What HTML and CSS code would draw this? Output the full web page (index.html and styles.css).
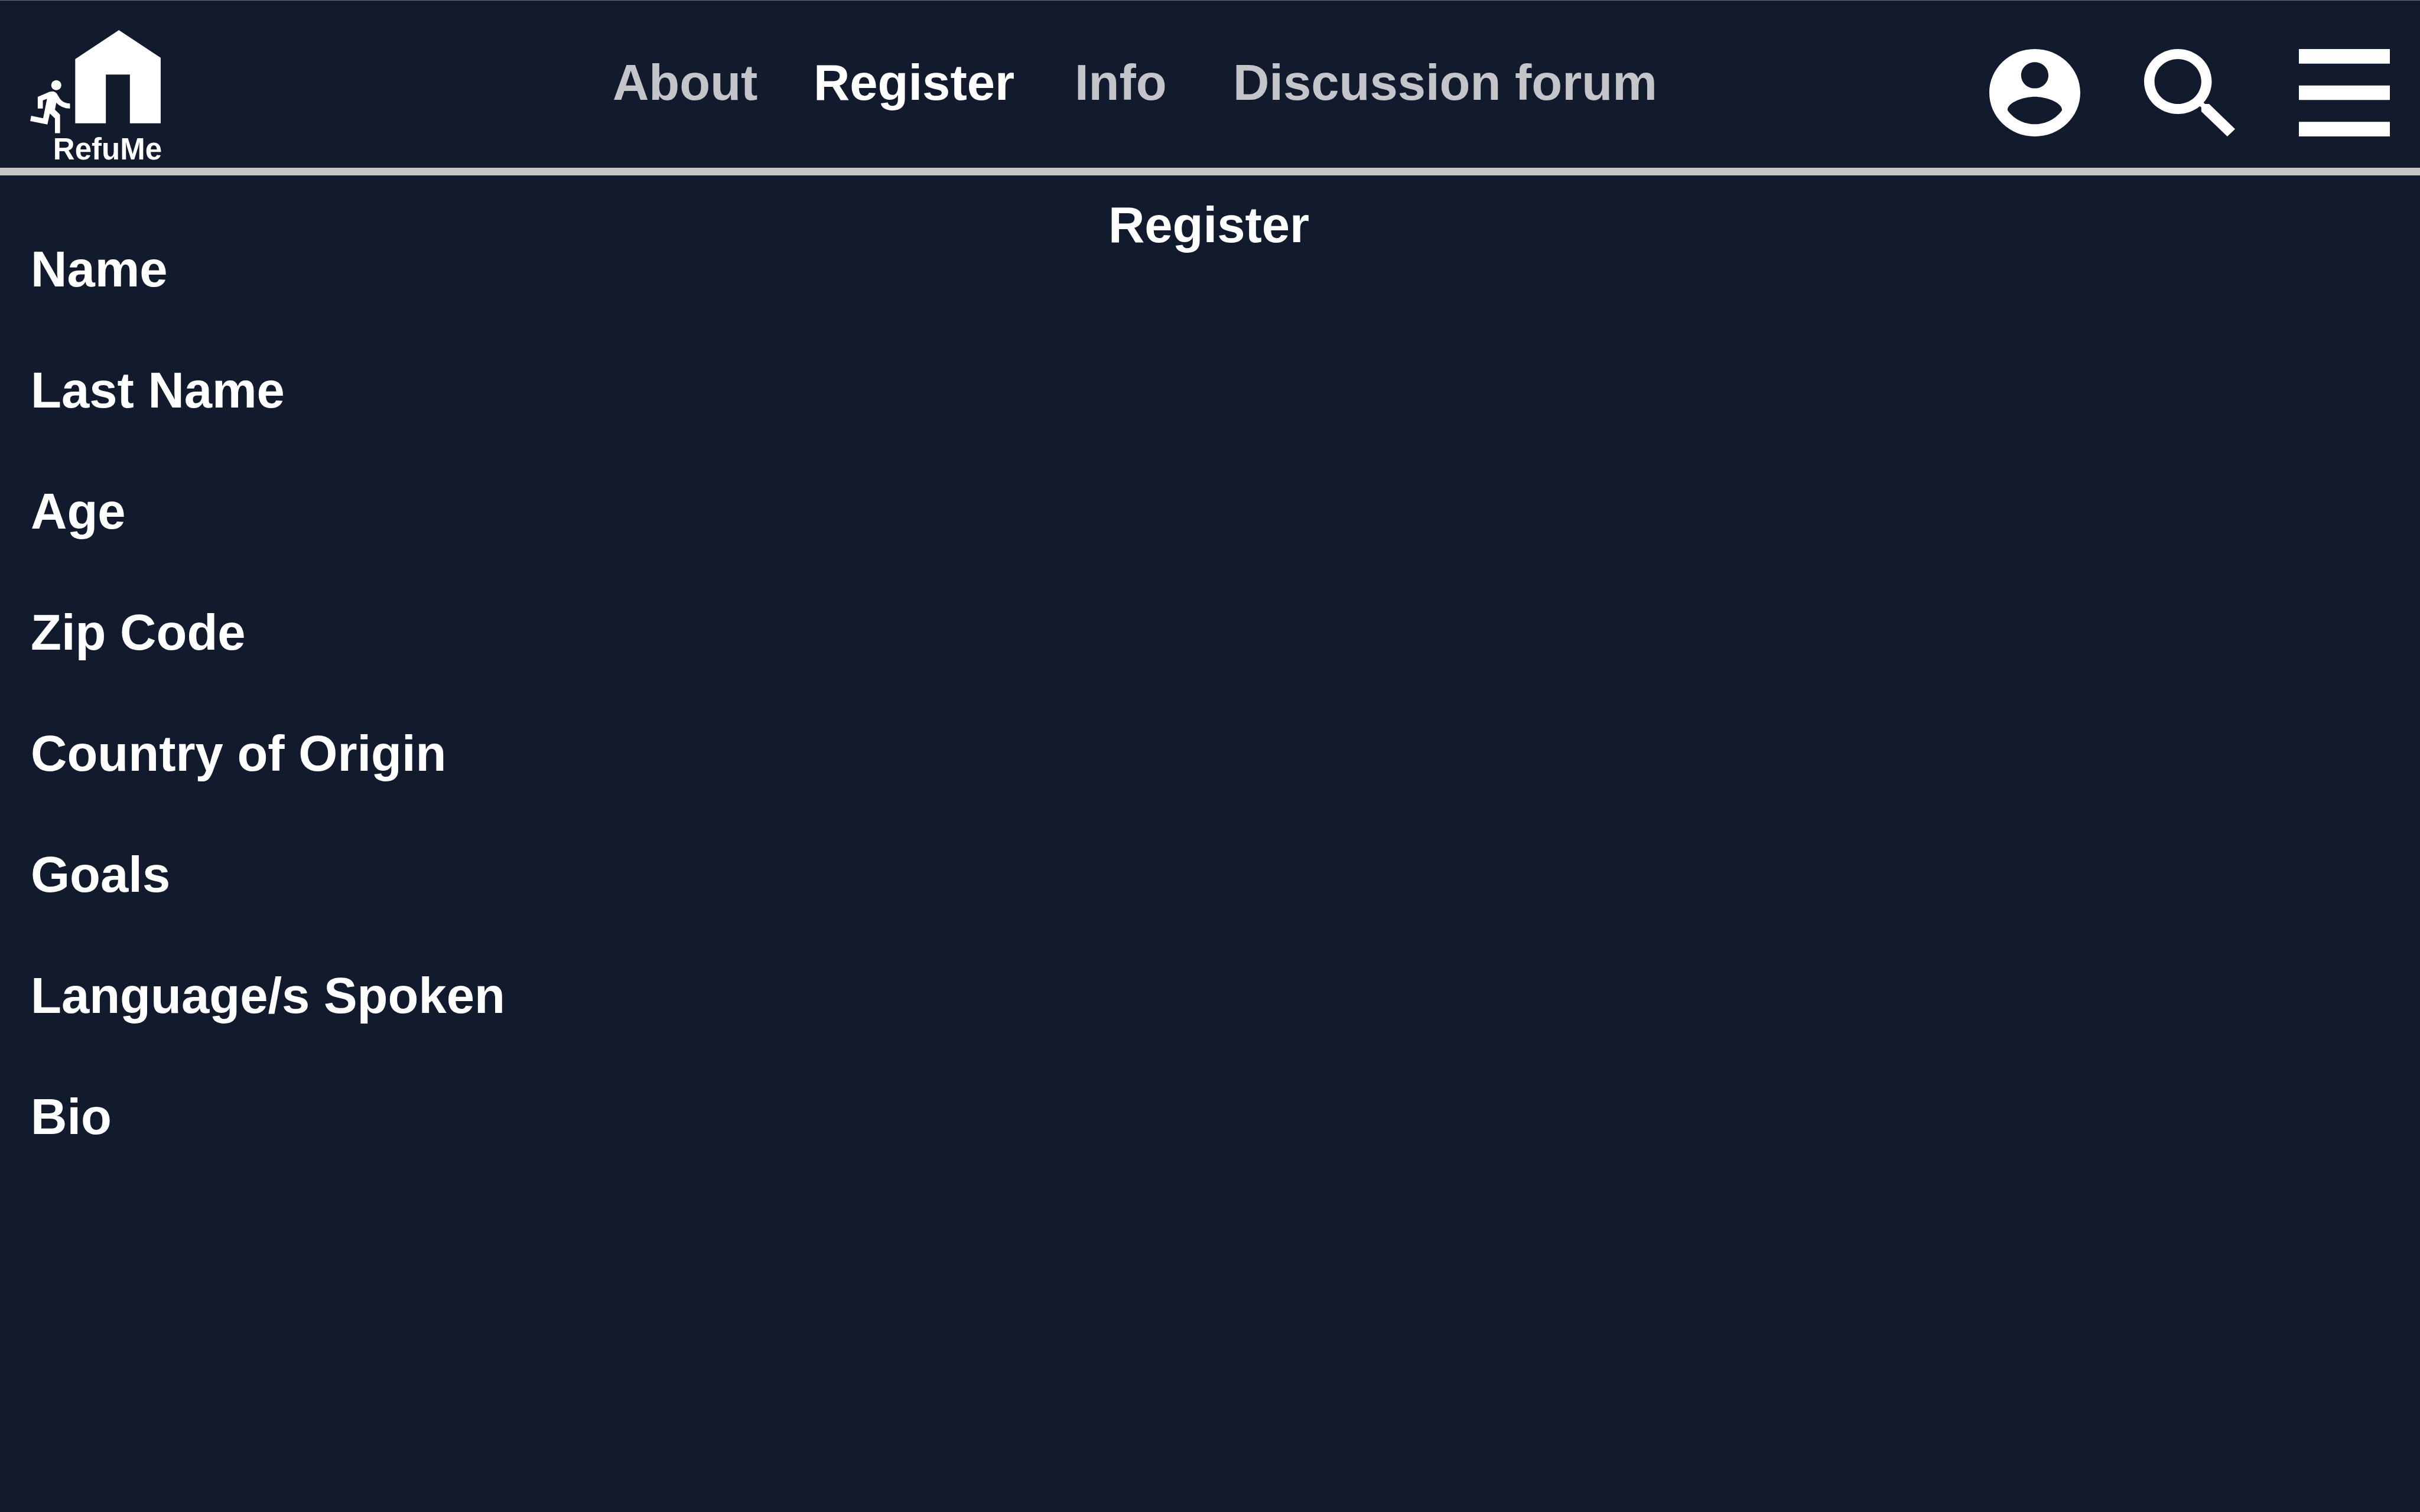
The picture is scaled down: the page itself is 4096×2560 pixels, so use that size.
FILE: index.html
```html
<!DOCTYPE html>
<html lang="en">
<head>
  <meta charset="utf-8">
  <meta name="viewport" content="width=device-width, initial-scale=1">
  <title>RefuMe</title>
  <link rel="stylesheet" href="styles.css">
</head>
<body>
  <header class="site-header">
    <a class="logo" href="#">
      <svg class="logo-mark" viewBox="225 225 975 774" aria-hidden="true">
        <path d="M885 225 1196 431V919H967V556H788V919H560V440Z"/>
        <circle cx="419" cy="635" r="37.5"/>
        <path d="M281 722 368 685Q385 680 400 682 413 684 423 698L447 737Q474 771 521 771V809Q460 809 419 766L409 818 447 854V992H409V882L371 846 353 927 225 902 232 863 321 881 350 736 319 748V809H281Z"/>
      </svg>
      <span class="logo-name">RefuMe</span>
    </a>

    <nav class="nav">
      <a class="nav-link" href="#">About</a>
      <a class="nav-link is-active" href="#" aria-current="page">Register</a>
      <a class="nav-link" href="#">Info</a>
      <a class="nav-link" href="#">Discussion forum</a>
    </nav>

    <div class="actions">
      <button class="icon-button" type="button" aria-label="Account">
        <svg class="icon" viewBox="2 2 20 20" preserveAspectRatio="none" aria-hidden="true">
          <path d="M12 2C6.48 2 2 6.48 2 12s4.48 10 10 10 10-4.48 10-10S17.52 2 12 2zm0 3c1.66 0 3 1.34 3 3s-1.34 3-3 3-3-1.34-3-3 1.34-3 3-3zm0 14.2c-2.5 0-4.71-1.28-6-3.22.03-1.99 4-3.08 6-3.08 1.99 0 5.97 1.09 6 3.08-1.29 1.94-3.5 3.22-6 3.22z"/>
        </svg>
      </button>
      <button class="icon-button" type="button" aria-label="Search">
        <svg class="icon" viewBox="3 3 17.49 17.49" preserveAspectRatio="none" aria-hidden="true">
          <path d="M15.5 14h-.79l-.28-.27C15.41 12.59 16 11.11 16 9.5 16 5.91 13.09 3 9.5 3S3 5.91 3 9.5 5.91 16 9.5 16c1.61 0 3.09-.59 4.23-1.57l.27.28v.79l5 4.99L20.49 19l-4.99-5zm-6 0C7.01 14 5 11.99 5 9.5S7.01 5 9.5 5 14 7.01 14 9.5 11.99 14 9.5 14z"/>
        </svg>
      </button>
      <button class="icon-button" type="button" aria-label="Menu">
        <svg class="icon" viewBox="3 6 18 12" preserveAspectRatio="none" aria-hidden="true">
          <path d="M3 18h18v-2H3v2zm0-5h18v-2H3v2zm0-7v2h18V6H3z"/>
        </svg>
      </button>
    </div>
  </header>

  <main class="page">
    <h1 class="page-title">Register</h1>
    <ul class="fields">
      <li>Name</li>
      <li>Last Name</li>
      <li>Age</li>
      <li>Zip Code</li>
      <li>Country of Origin</li>
      <li>Goals</li>
      <li>Language/s Spoken</li>
      <li>Bio</li>
    </ul>
  </main>
</body>
</html>
```
FILE: styles.css
```css
* {
  box-sizing: border-box;
}

body {
  margin: 0;
  min-height: 100vh;
  background: #121a2e;
  color: #fff;
  font: bold 85px/96px "Liberation Sans", Arial, Helvetica, sans-serif;
}

/* Header: logo, links and icons, with free space shared 19:14 between them */
.site-header {
  display: grid;
  grid-template-columns: auto 19fr auto 14fr auto;
  align-items: start;
  padding: 50px 51px 6px;
  border-top: 1px solid #6b6f7a;
  border-bottom: 13px solid #c4c4c4;
}

.logo {
  display: flex;
  flex-direction: column;
  align-items: flex-end;
  width: 223px;
  color: inherit;
  text-decoration: none;
}

.logo-mark {
  align-self: flex-start;
  width: 222px;
  height: 176px;
  fill: currentColor;
}

.logo-name {
  font-size: 51px;
  line-height: 51px;
}

.nav {
  grid-column: 3;
  display: grid;
  grid-template-columns: 340px 442px 268px auto;
  margin-top: 41px;
}

.nav-link {
  color: #c4c5c8;
  text-decoration: none;
  white-space: nowrap;
}

.nav-link.is-active {
  color: #fff;
}

.actions {
  grid-column: 5;
  display: flex;
  gap: 108px;
  margin-top: 32px;
}

.icon-button {
  padding: 0;
  border: 0;
  background: none;
  color: inherit;
  cursor: pointer;
}

.icon {
  display: block;
  width: 154px;
  height: 148px;
  fill: currentColor;
}

/* Page: title in the centre column, field names down the left */
.page {
  display: grid;
  grid-template-columns: 1fr auto 1fr;
  align-items: start;
  padding: 36px 56px 36px 52px;
}

.page-title {
  grid-area: 1 / 2;
  margin: 0;
  font-size: 85px;
}

.fields {
  grid-area: 1 / 1;
  display: grid;
  gap: 109px;
  margin: 0;
  padding: 75px 0 0;
  list-style: none;
}
```
